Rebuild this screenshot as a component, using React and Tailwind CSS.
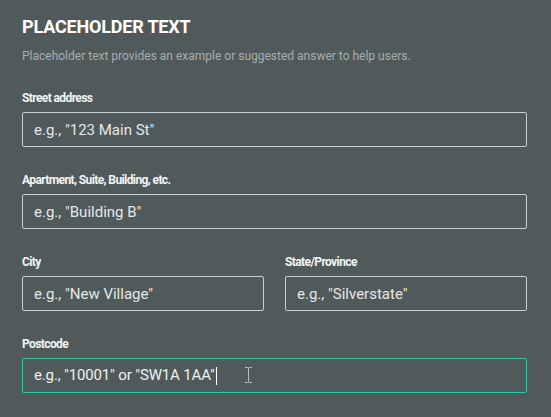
import React from 'react';

const font = { fontFamily: 'Roboto, "Liberation Sans", sans-serif' };

function Label({ children }) {
    return <label className="text-[12px] font-bold tracking-[-0.05em] text-[#f3f5f5] leading-[14px] mb-[7px]">{children}</label>;
}

function Field({ label, placeholder, className = '' }) {
    return (
        <div className={`flex flex-col ${className}`}>
            <Label>{label}</Label>
            <input
                className="h-[35px] w-full rounded-[2px] border border-[#c9cfcf] bg-transparent px-[11px] text-[15px] text-[#eef1f1] placeholder:text-[#e4e8e8] outline-none"
                placeholder={placeholder}
            />
        </div>
    );
}

export default function App() {
    return (
        <div className="min-h-screen w-full bg-[#505a5b] px-[22px] pt-[15px]" style={font}>
            <h2 className="text-[18px] font-bold uppercase tracking-[-0.01em] text-white leading-[24px]">Placeholder text</h2>
            <p className="mt-[9px] text-[12px] text-[#a7aeaf] leading-[16px]">
                Placeholder text provides an example or suggested answer to help users.
            </p>

            <div className="mt-[27px] w-[505px] flex flex-col gap-[26px]">
                <Field label="Street address" placeholder={'e.g., "123 Main St"'} />
                <Field label="Apartment, Suite, Building, etc." placeholder={'e.g., "Building B"'} />
                <div className="flex gap-[21px]">
                    <Field className="flex-1" label="City" placeholder={'e.g., "New Village"'} />
                    <Field className="flex-1" label="State/Province" placeholder={'e.g., "Silverstate"'} />
                </div>
                <div className="flex flex-col">
                    <Label>Postcode</Label>
                    <div className="relative h-[35px] w-full rounded-[2px] border border-[#2ec4a6] px-[11px] flex items-center text-[15px] text-[#eef1f1]">
                        <span className="tracking-[-0.01em]">e.g., "10001" or "SW1A 1AA"</span>
                        <span className="ml-[1px] inline-block h-[18px] w-[1px] bg-white" />
                        <svg className="absolute left-[221px] top-[8px]" width="9" height="16" viewBox="0 0 9 16" fill="none" stroke="#b9bfbf" strokeWidth="1">
                            <path d="M1 0.5h2.5M5.5 0.5H8M4.5 1v14M1 15.5h2.5M5.5 15.5H8M3.5 0.5c0.6 0 1 0.4 1 1M5.5 0.5c-0.6 0-1 0.4-1 1M3.5 15.5c0.6 0 1-0.4 1-1M5.5 15.5c-0.6 0-1-0.4-1-1" />
                        </svg>
                    </div>
                </div>
            </div>
        </div>
    );
}
